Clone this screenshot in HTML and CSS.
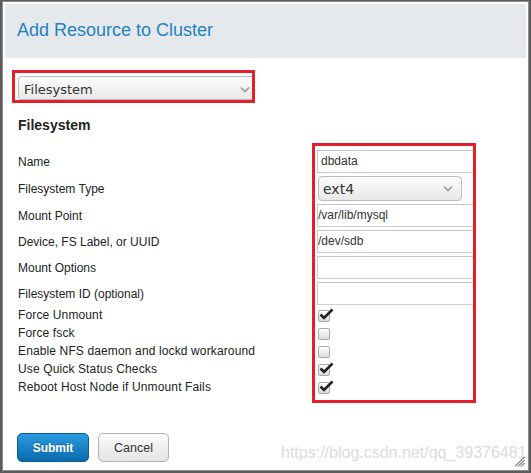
FILE: index.html
```html
<!DOCTYPE html>
<html>
<head>
<meta charset="utf-8">
<link rel="stylesheet" href="styles.css">
</head>
<body>
<div class="frame">
  <div class="header"><h1 class="title">Add Resource to Cluster</h1></div>
  <div class="content">
    <div class="select select-type">
      <span class="select-text">Filesystem</span>
      <svg class="chev" width="10" height="7" viewBox="0 0 10 7"><path d="M1 1.5 L5 5.5 L9 1.5" fill="none" stroke="#9a9a9a" stroke-width="1.6"/></svg>
    </div>
    <h2 class="section">Filesystem</h2>
    <div class="form">
      <div class="label">Name</div>
      <div class="input pad">dbdata</div>
      <div class="label">Filesystem Type</div>
      <div class="select select-fs">
        <span class="select-text big">ext4</span>
        <svg class="chev" width="10" height="7" viewBox="0 0 10 7"><path d="M1 1.5 L5 5.5 L9 1.5" fill="none" stroke="#9a9a9a" stroke-width="1.6"/></svg>
      </div>
      <div class="label">Mount Point</div>
      <div class="input">/var/lib/mysql</div>
      <div class="label">Device, FS Label, or UUID</div>
      <div class="input">/dev/sdb</div>
      <div class="label">Mount Options</div>
      <div class="input"></div>
      <div class="label">Filesystem ID (optional)</div>
      <div class="input"></div>
    </div>
    <div class="checks">
      <div class="clabel">Force Unmount</div>
      <div class="cbox-cell"><span class="cbox"><svg class="tick" width="15" height="13" viewBox="0 0 15 13"><path d="M1.5 6.5 L5 10 L13.5 1.5" fill="none" stroke="#222" stroke-width="2.6" stroke-linejoin="miter"/></svg></span></div>
      <div class="clabel">Force fsck</div>
      <div class="cbox-cell"><span class="cbox"></span></div>
      <div class="clabel">Enable NFS daemon and lockd workaround</div>
      <div class="cbox-cell"><span class="cbox"></span></div>
      <div class="clabel">Use Quick Status Checks</div>
      <div class="cbox-cell"><span class="cbox"><svg class="tick" width="15" height="13" viewBox="0 0 15 13"><path d="M1.5 6.5 L5 10 L13.5 1.5" fill="none" stroke="#222" stroke-width="2.6" stroke-linejoin="miter"/></svg></span></div>
      <div class="clabel">Reboot Host Node if Unmount Fails</div>
      <div class="cbox-cell"><span class="cbox"><svg class="tick" width="15" height="13" viewBox="0 0 15 13"><path d="M1.5 6.5 L5 10 L13.5 1.5" fill="none" stroke="#222" stroke-width="2.6" stroke-linejoin="miter"/></svg></span></div>
    </div>
    <div class="buttons">
      <button class="btn btn-primary">Submit</button>
      <button class="btn btn-default">Cancel</button>
    </div>
  </div>
  <div class="annot annot-top"></div>
  <div class="annot annot-right"></div>
  <div class="watermark">https://blog.csdn.net/qq_39376481</div>
  <svg class="grip" width="11" height="11" viewBox="0 0 11 11"><path d="M10.5 1 L1 10.5 M10.5 4 L4 10.5 M10.5 7 L7 10.5" stroke="#333" stroke-width="1"/></svg>
</div>
</body>
</html>
```
FILE: styles.css
```css
* { box-sizing: border-box; }
html, body { margin: 0; padding: 0; }
body {
  background: #5c5c5c;
  width: 531px;
  height: 473px;
  overflow: hidden;
  font-family: "Liberation Sans", Arial, sans-serif;
  color: #222;
}
.frame {
  position: relative;
  margin: 1px 2px 0 2px;
  width: 527px;
  height: 470px;
  border: 1px solid #8c8c8c;
  background: #fff;
  overflow: hidden;
}
.header {
  margin: 2px 2px 0 2px;
  height: 54px;
  background: #e6e9ec;
  padding: 16px 0 0 12px;
}
.title {
  margin: 0;
  font-weight: normal;
  font-size: 18px;
  line-height: 21px;
  color: #1e83c4;
}
.content {
  padding-left: 15px;
}
.select {
  display: flex;
  align-items: center;
  justify-content: space-between;
  border: 1px solid #bcbcbc;
  border-radius: 3px;
  background: linear-gradient(#fbfbfb, #e9e9e9);
  font-family: "DejaVu Sans", sans-serif;
  color: #333;
}
.select-type {
  margin-top: 18px;
  width: 237px;
  height: 24px;
  padding: 2px 4px 0 5px;
  font-size: 13px;
}
.select-fs {
  width: 144px;
  height: 25px;
  margin-left: 1px;
  padding: 0 8px 0 4px;
  border-radius: 4px;
}
.select-text { line-height: 1; }
.select-text.big { font-size: 14px; }
.chev { display: block; }
.section {
  margin: 17px 0 0 0;
  font-size: 14px;
  line-height: 17px;
  font-weight: bold;
  color: #222;
}
.form {
  margin-top: 16px;
  display: grid;
  grid-template-columns: 299px 158px;
  grid-template-rows: 23px 25px 23px 23px 23px 23px;
  row-gap: 3px;
  align-items: center;
}
.label {
  font-size: 12px;
  line-height: 14px;
  color: #222;
}
.input {
  height: 23px;
  border: 1px solid #cdcdcd;
  border-top-color: #c4c4c4;
  font-size: 12px;
  line-height: 21px;
  padding-left: 0;
  color: #333;
}
.input.pad { padding-left: 3px; }
.checks {
  margin-top: 1px;
  display: grid;
  grid-template-columns: 300px 40px;
  grid-auto-rows: 18px;
  align-items: center;
}
.clabel {
  font-size: 12px;
  letter-spacing: 0.13px;
  line-height: 14px;
  color: #222;
}
.cbox-cell { display: flex; align-items: center; padding-top: 1px; }
.cbox {
  position: relative;
  display: block;
  width: 12px;
  height: 12px;
  border: 1px solid #a9a9a9;
  border-radius: 2px;
  background: linear-gradient(#fdfdfd, #dcdcdc);
}
.tick {
  position: absolute;
  left: 0px;
  top: -3px;
}
.buttons {
  margin-top: 37px;
  margin-left: -1px;
  display: flex;
  gap: 9px;
}
.btn {
  height: 29px;
  border-radius: 5px;
  font-family: "Liberation Sans", Arial, sans-serif;
  padding: 0;
  margin: 0;
}
.btn-primary {
  width: 72px;
  border: 1px solid #0b5d9a;
  background: linear-gradient(#2a9be0, #0b69ad);
  color: #fff;
  font-weight: bold;
  font-size: 12px;
  text-shadow: 0 -1px 0 rgba(0,0,0,0.25);
}
.btn-default {
  width: 71px;
  border: 1px solid #b3b3b3;
  background: linear-gradient(#fbfbfb, #e4e4e4);
  color: #333;
  font-size: 12.5px;
}
.annot {
  position: absolute;
  border: 3px solid #e61e2a;
}
.annot-top {
  left: 9px;
  top: 68px;
  width: 243px;
  height: 33px;
}
.annot-right {
  left: 309px;
  top: 141px;
  width: 164px;
  height: 260px;
}
.watermark {
  position: absolute;
  left: 278px;
  top: 442px;
  font-size: 16px;
  color: #dcdcdc;
  white-space: nowrap;
}
.grip {
  position: absolute;
  right: 3px;
  bottom: 3px;
}
```
